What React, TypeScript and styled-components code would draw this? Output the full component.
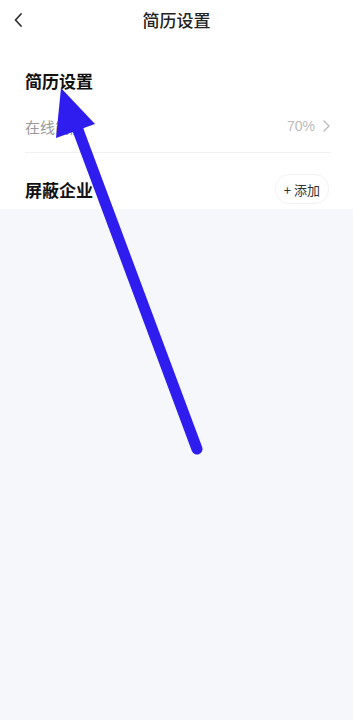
import React from 'react';
import styled, { createGlobalStyle } from 'styled-components';

const GlobalStyle = createGlobalStyle`
  html, body {
    margin: 0;
    padding: 0;
    background: #f5f7fb;
  }
  body {
    font-family: "Noto Sans CJK SC", "Noto Sans", sans-serif;
  }
`;

const Page = styled.div`
  position: relative;
  width: 353px;
  height: 720px;
  background: #f5f7fb;
  overflow: hidden;
`;

const Top = styled.div`
  background: #fff;
`;

const NavBar = styled.div`
  position: relative;
  height: 40px;
  display: flex;
  align-items: center;
  justify-content: center;
`;

const BackButton = styled.div`
  position: absolute;
  left: 13px;
  top: 11px;
  width: 14px;
  height: 18px;
  display: flex;
  align-items: center;
`;

const NavTitle = styled.div`
  font-size: 17px;
  color: #222;
  font-weight: 500;
  margin-top: -2px;
`;

const Section = styled.div`
  padding: 0 22px 0 25px;
`;

const SectionTitle = styled.div<{ $h: number; $pt: number }>`
  display: flex;
  align-items: center;
  justify-content: space-between;
  height: ${(p) => p.$h}px;
  padding-top: ${(p) => p.$pt}px;
  font-size: 17px;
  font-weight: 700;
  color: #111;
`;

const Row = styled.div`
  display: flex;
  align-items: center;
  justify-content: space-between;
  height: 52px;
  margin-top: 8px;
  border-bottom: 1px solid #f0f0f0;
`;

const RowLabel = styled.div`
  font-size: 15px;
  color: #999;
`;

const RowValue = styled.div`
  display: flex;
  align-items: center;
  gap: 6px;
  font-size: 14px;
  color: #bbb;
  font-family: "Liberation Sans", "Noto Sans CJK SC", sans-serif;
`;

const AddButton = styled.div`
  display: flex;
  align-items: center;
  gap: 3px;
  height: 28px;
  padding: 0 8px 0 8px;
  margin-right: 2px;
  border: 1px solid #f2f2f2;
  border-radius: 14px;
  font-size: 13px;
  font-weight: 400;
  color: #333;
`;

const Overlay = styled.svg`
  position: absolute;
  left: 0;
  top: 0;
  pointer-events: none;
`;

export default function App() {
  return (
    <Page>
      <GlobalStyle />
      <Top>
        <NavBar>
          <BackButton>
            <svg width="10" height="16" viewBox="0 0 10 16">
              <path d="M8 2 L2.5 8 L8 14" fill="none" stroke="#333" strokeWidth="1.8" strokeLinecap="round" strokeLinejoin="round" />
            </svg>
          </BackButton>
          <NavTitle>简历设置</NavTitle>
        </NavBar>
        <Section>
          <SectionTitle $h={24} $pt={28}>简历设置</SectionTitle>
          <Row>
            <RowLabel>在线简历</RowLabel>
            <RowValue>
              70%
              <svg width="10" height="14" viewBox="0 0 10 14">
                <path d="M3 2 L8 7 L3 12" fill="none" stroke="#bbb" strokeWidth="1.4" strokeLinecap="round" strokeLinejoin="round" />
              </svg>
            </RowValue>
          </Row>
          <SectionTitle $h={40} $pt={16}>
            屏蔽企业
            <AddButton>
              <span>+</span>
              <span>添加</span>
            </AddButton>
          </SectionTitle>
        </Section>
      </Top>
      <Overlay width="353" height="720" viewBox="0 0 353 720">
        <line x1="197" y1="449" x2="78" y2="130" stroke="#2f1df0" strokeWidth="11" strokeLinecap="round" />
        <polygon points="61,88 56,138 95,124" fill="#2f1df0" />
      </Overlay>
    </Page>
  );
}
